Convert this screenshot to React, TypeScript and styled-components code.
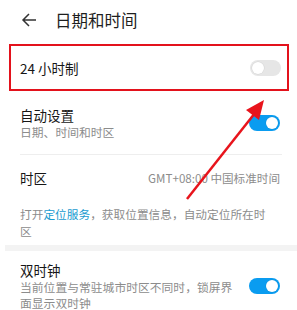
import React from 'react';
import styled, { createGlobalStyle } from 'styled-components';

const GlobalStyle = createGlobalStyle`
  html, body {
    margin: 0;
    padding: 0;
    background: #ffffff;
  }
  body {
    font-family: "Noto Sans CJK SC", "Noto Sans", sans-serif;
    color: #1a1a1a;
  }
`;

const Page = styled.div`
  position: relative;
  width: 297px;
  height: 310px;
  overflow: hidden;
  background: #fff;
`;

const Header = styled.div`
  display: flex;
  align-items: center;
  height: 40px;
  padding-left: 21px;
`;

const BackIcon = styled.svg`
  width: 16px;
  height: 16px;
  margin-right: 18px;
`;

const Title = styled.div`
  font-size: 16.5px;
  line-height: 20px;
  color: #1e1e1e;
`;

const Highlight = styled.div`
  margin: 4px 8px 0 9px;
  height: 47px;
  box-sizing: border-box;
  border: 2.5px solid #e3121c;
  display: flex;
  align-items: center;
  justify-content: space-between;
  padding: 0 6px 0 9px;
`;

const Row = styled.div<{ $h: number }>`
  display: flex;
  align-items: center;
  justify-content: space-between;
  height: ${(p) => p.$h}px;
  padding: 0 17px 0 20px;
  gap: 12px;
`;

const TextCol = styled.div`
  display: flex;
  flex-direction: column;
  max-width: 222px;
`;

const Label = styled.div`
  font-size: 13.5px;
  line-height: 18px;
  color: #161616;
`;

const Sub = styled.div`
  font-size: 11.8px;
  line-height: 16px;
  color: #8c8c8c;
`;

const Value = styled.div`
  font-size: 11.6px;
  color: #8c8c8c;
`;

const Divider = styled.div`
  height: 1px;
  background: #eeeeee;
  margin: 0 15px 0 20px;
`;

const Note = styled.div`
  font-size: 11.7px;
  line-height: 17px;
  color: #8c8c8c;
  width: 250px;
  padding: 4px 0 0 20px;
  height: 40px;
`;

const Link = styled.span`
  color: #1a9bd0;
`;

const Band = styled.div`
  height: 6px;
  margin-left: 5px;
  background: #f3f3f3;
`;

const Toggle = styled.div<{ $on?: boolean }>`
  flex: none;
  position: relative;
  width: 31px;
  height: 16px;
  border-radius: 8px;
  background: ${(p) => (p.$on ? '#0a9cf0' : '#e6e6e6')};
  &::after {
    content: '';
    position: absolute;
    top: 2px;
    left: ${(p) => (p.$on ? '17px' : '2px')};
    width: 12px;
    height: 12px;
    border-radius: 50%;
    background: #fff;
    box-shadow: 0 0 0 0.5px rgba(0, 0, 0, 0.08);
  }
`;

const Arrow = styled.svg`
  position: absolute;
  left: 0;
  top: 0;
  width: 297px;
  height: 310px;
  pointer-events: none;
`;

const App: React.FC = () => {
  return (
    <Page>
      <GlobalStyle />
      <Header>
        <BackIcon viewBox="0 0 16 16">
          <path d="M15 8H2M8 2L2 8l6 6" fill="none" stroke="#333" strokeWidth="1.5" />
        </BackIcon>
        <Title>日期和时间</Title>
      </Header>
      <Highlight>
        <Label>24 小时制</Label>
        <Toggle />
      </Highlight>
      <Row $h={63}>
        <TextCol>
          <Label>自动设置</Label>
          <Sub>日期、时间和时区</Sub>
        </TextCol>
        <Toggle $on />
      </Row>
      <Divider />
      <Row $h={46}>
        <Label>时区</Label>
        <Value>GMT+08:00 中国标准时间</Value>
      </Row>
      <Note>
        打开<Link>定位服务</Link>，获取位置信息，自动定位所在时区
      </Note>
      <Band />
      <Row $h={70}>
        <TextCol>
          <Label>双时钟</Label>
          <Sub>当前位置与常驻城市时区不同时，锁屏界面显示双时钟</Sub>
        </TextCol>
        <Toggle $on />
      </Row>
      <Arrow viewBox="0 0 297 310">
        <line x1="187" y1="199" x2="255" y2="113" stroke="#e8141c" strokeWidth="2.5" />
        <polygon points="264,100 246,110 259,120" fill="#e8141c" />
      </Arrow>
    </Page>
  );
};

export default App;
